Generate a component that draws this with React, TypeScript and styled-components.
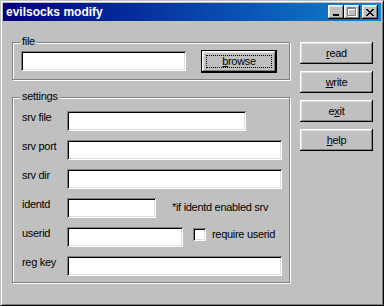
import React from 'react';
import styled, { createGlobalStyle } from 'styled-components';

const GlobalStyle = createGlobalStyle`
  html, body {
    margin: 0;
    padding: 0;
    background: #c0c0c0;
  }
  body {
    font-family: 'Liberation Sans', Arial, sans-serif;
    font-size: 11px;
    letter-spacing: -0.3px;
    color: #000;
  }
`;

const raised = `
  box-shadow: inset -1px -1px #000, inset 1px 1px #fff,
    inset -2px -2px #808080, inset 2px 2px #dfdfdf;
`;

const sunken = `
  box-shadow: inset 1px 1px #808080, inset -1px -1px #fff,
    inset 2px 2px #000, inset -2px -2px #dfdfdf;
`;

const Window = styled.div`
  width: 384px;
  height: 306px;
  box-sizing: border-box;
  background: #c0c0c0;
  border: 1px solid;
  border-color: #c0c0c0 #000 #000 #c0c0c0;
  box-shadow: inset 1px 1px #fff, inset -1px -1px #808080;
  padding: 2px;
  display: flex;
  flex-direction: column;
`;

const TitleBar = styled.div`
  height: 18px;
  flex: none;
  display: flex;
  align-items: center;
  justify-content: space-between;
  padding: 0 3px 0 3px;
  background: linear-gradient(90deg, #000080, #1084d0);
  color: #fff;
  font-weight: bold;
  font-size: 12px;
  letter-spacing: 0;
`;

const TitleText = styled.span`
  line-height: 18px;
`;

const TitleButtons = styled.div`
  display: flex;
  align-items: center;
`;

const TitleButton = styled.div<{ $gap?: number }>`
  width: 16px;
  height: 14px;
  box-sizing: border-box;
  background: #c0c0c0;
  ${raised}
  margin-left: ${(p) => p.$gap ?? 0}px;
  display: flex;
  align-items: center;
  justify-content: center;
  svg {
    display: block;
  }
`;

const Body = styled.div`
  flex: 1;
  display: flex;
  padding: 21px 0 0 9px;
`;

const LeftColumn = styled.div`
  display: flex;
  flex-direction: column;
  gap: 17px;
`;

const Group = styled.div<{ $height: number }>`
  position: relative;
  box-sizing: border-box;
  width: 278px;
  height: ${(p) => p.$height}px;
  border: 1px solid #808080;
  box-shadow: inset 1px 1px #fff, 1px 1px #fff;
`;

const GroupLabel = styled.span`
  position: absolute;
  top: -8px;
  left: 7px;
  padding: 0 2px 0 2px;
  background: #c0c0c0;
  line-height: 13px;
`;

const FileRow = styled.div`
  display: flex;
  align-items: flex-start;
  padding: 8px 0 0 8px;
`;

const SettingsBody = styled.div`
  display: flex;
  flex-direction: column;
  gap: 9px;
  padding: 13px 8px 0 9px;
`;

const Row = styled.div`
  display: flex;
  align-items: flex-start;
  height: 20px;
`;

const Label = styled.span`
  width: 45px;
  flex: none;
  line-height: 13px;
`;

const Field = styled.input<{ $w: number }>`
  width: ${(p) => p.$w}px;
  height: 20px;
  flex: none;
  box-sizing: border-box;
  border: none;
  outline: none;
  margin: 0;
  padding: 2px 3px;
  background: #fff;
  font: inherit;
  ${sunken}
`;

const Note = styled.span`
  margin-left: 16px;
  padding-top: 3px;
  line-height: 13px;
`;

const CheckWrap = styled.label`
  display: flex;
  align-items: center;
  margin-left: 10px;
  padding-top: 1px;
  line-height: 13px;
`;

const CheckBox = styled.span`
  width: 13px;
  height: 13px;
  box-sizing: border-box;
  background: #fff;
  margin-right: 6px;
  ${sunken}
`;

const RightColumn = styled.div`
  display: flex;
  flex-direction: column;
  gap: 7px;
  margin-left: 10px;
`;

const Button = styled.div`
  width: 73px;
  height: 22px;
  box-sizing: border-box;
  background: #c0c0c0;
  ${raised}
  display: flex;
  align-items: center;
  justify-content: center;
  line-height: 13px;
`;

const DefaultButton = styled.div`
  width: 76px;
  height: 23px;
  margin: -1px 0 0 15px;
  box-sizing: border-box;
  border: 1px solid #000;
  background: #c0c0c0;
  ${raised}
  padding: 4px;
  display: flex;
`;

const FocusRect = styled.div`
  flex: 1;
  border: 1px dotted #000;
  display: flex;
  align-items: center;
  justify-content: center;
  line-height: 11px;
`;

function MinimizeIcon() {
  return (
    <svg width="8" height="7" viewBox="0 0 8 7">
      <rect x="1" y="5" width="6" height="2" fill="#000" />
    </svg>
  );
}

function MaximizeIcon() {
  // greyed out: window can't be maximized
  return (
    <svg width="10" height="10" viewBox="0 0 10 10">
      <path d="M1.5 1.5h8v8h-8z M1 2.5h9" stroke="#fff" fill="none" />
      <path d="M0.5 0.5h8v8h-8z M0 1.5h9" stroke="#808080" fill="none" />
    </svg>
  );
}

function CloseIcon() {
  return (
    <svg width="8" height="7" viewBox="0 0 8 7">
      <path
        d="M0 0h2v1h1v1h2V1h1V0h2v1H7v1H6v1H5v1h1v1h1v1h1v1H6V6H5V5H3v1H2v1H0V6h1V5h1V4h1V3H2V2H1V1H0z"
        fill="#000"
      />
    </svg>
  );
}

const settings = [
  { label: 'srv file', width: 179 },
  { label: 'srv port', width: 215 },
  { label: 'srv dir', width: 215 },
];

export default function App() {
  return (
    <>
      <GlobalStyle />
      <Window>
        <TitleBar>
          <TitleText>evilsocks modify</TitleText>
          <TitleButtons>
            <TitleButton>
              <MinimizeIcon />
            </TitleButton>
            <TitleButton>
              <MaximizeIcon />
            </TitleButton>
            <TitleButton $gap={2}>
              <CloseIcon />
            </TitleButton>
          </TitleButtons>
        </TitleBar>

        <Body>
          <LeftColumn>
            <Group $height={38}>
              <GroupLabel>file</GroupLabel>
              <FileRow>
                <Field $w={165} />
                <DefaultButton>
                  <FocusRect>
                    <span>
                      <u>b</u>rowse
                    </span>
                  </FocusRect>
                </DefaultButton>
              </FileRow>
            </Group>

            <Group $height={186}>
              <GroupLabel>settings</GroupLabel>
              <SettingsBody>
                {settings.map((s) => (
                  <Row key={s.label}>
                    <Label>{s.label}</Label>
                    <Field $w={s.width} />
                  </Row>
                ))}
                <Row>
                  <Label>identd</Label>
                  <Field $w={89} />
                  <Note>*if identd enabled srv</Note>
                </Row>
                <Row>
                  <Label>userid</Label>
                  <Field $w={116} />
                  <CheckWrap>
                    <CheckBox />
                    require userid
                  </CheckWrap>
                </Row>
                <Row>
                  <Label>reg key</Label>
                  <Field $w={215} />
                </Row>
              </SettingsBody>
            </Group>
          </LeftColumn>

          <RightColumn>
            <Button>
              <span>
                <u>r</u>ead
              </span>
            </Button>
            <Button>
              <span>
                <u>w</u>rite
              </span>
            </Button>
            <Button>
              <span>
                e<u>x</u>it
              </span>
            </Button>
            <Button>
              <span>
                <u>h</u>elp
              </span>
            </Button>
          </RightColumn>
        </Body>
      </Window>
    </>
  );
}
